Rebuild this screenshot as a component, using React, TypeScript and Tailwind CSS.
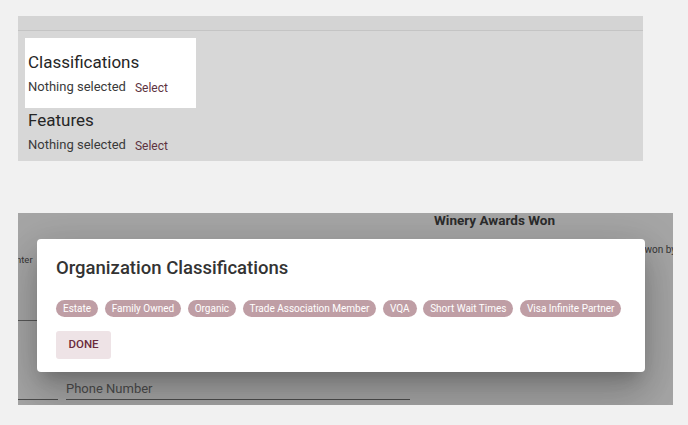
import React from "react";

const chips = [
  "Estate",
  "Family Owned",
  "Organic",
  "Trade Association Member",
  "VQA",
  "Short Wait Times",
  "Visa Infinite Partner",
];

export default function App() {
  return (
    <div
      className="w-[688px] h-[425px] bg-[#f1f1f1] overflow-hidden"
      style={{ fontFamily: "Roboto, 'Liberation Sans', sans-serif" }}
    >
      {/* Top panel */}
      <div className="ml-[18px] mt-[16px] w-[625px] h-[145px] bg-[#d7d7d7] flex flex-col">
        <div className="h-[15px] bg-[#d4d4d4] border-b border-[#c4c4c4]" />
        <div className="pl-[7px] pt-[7px] flex flex-col">
          <div className="w-[171px] h-[70px] bg-white pl-[3px] pt-[14px] flex flex-col">
            <div className="text-[17px] leading-[20px] text-[#262626]">Classifications</div>
            <div className="flex items-center mt-[7px] h-[16px]">
              <span className="text-[13px] text-[#3a3a3a]">Nothing selected</span>
              <span className="ml-[9px] text-[12px] text-[#5e3340] mt-[2px]">Select</span>
            </div>
          </div>
          <div className="pl-[3px] pt-[2px] flex flex-col">
            <div className="text-[17px] leading-[20px] text-[#262626]">Features</div>
            <div className="flex items-center mt-[7px] h-[16px]">
              <span className="text-[13px] text-[#3a3a3a]">Nothing selected</span>
              <span className="ml-[9px] text-[12px] text-[#5e3340] mt-[2px]">Select</span>
            </div>
          </div>
        </div>
      </div>

      {/* Bottom panel with dialog */}
      <div className="relative ml-[18px] mt-[52px] w-[655px] h-[192px] bg-white overflow-hidden flex flex-col">
        <div className="flex justify-end pr-[118px] -mt-[2px] h-[18px] shrink-0">
          <span className="text-[13.5px] leading-[18px] font-bold text-[#444]">Winery Awards Won</span>
        </div>
        <div className="flex justify-end h-[12px] mt-[15px] shrink-0">
          <span className="text-[10px] leading-[12px] text-[#555] -mr-[3px]">won by</span>
        </div>
        <div className="flex h-[12px] -mt-[2px] shrink-0">
          <span className="text-[9.5px] leading-[12px] text-[#555] -ml-[2px]">nter</span>
        </div>
        <div className="mt-[54px] w-[20px] border-b border-[#888] shrink-0" />
        <div className="flex mt-[60px] gap-[8px] items-end shrink-0">
          <div className="w-[40px] border-b border-[#777]" />
          <div className="w-[344px] border-b border-[#777] flex flex-col">
            <span className="text-[13px] leading-[16px] text-[#777] pb-[2px]">Phone Number</span>
          </div>
        </div>

        <div className="absolute inset-0 bg-black/[0.35]" />

        <div className="absolute left-[19px] top-[26px] w-[608px] h-[133px] bg-white rounded-[4px] shadow-[0_11px_15px_-7px_rgba(0,0,0,0.2),0_24px_38px_3px_rgba(0,0,0,0.14),0_9px_46px_8px_rgba(0,0,0,0.12)] pl-[19px] pt-[17px] flex flex-col">
          <div className="text-[18.5px] leading-[24px] text-[#333] font-medium">
            Organization Classifications
          </div>
          <div className="flex gap-[6.5px] mt-[20px]">
            {chips.map((c) => (
              <span
                key={c}
                className="h-[17px] px-[7px] rounded-full bg-[#bf9ea5] text-white text-[10px] font-normal flex items-center leading-none"
              >
                {c}
              </span>
            ))}
          </div>
          <div className="mt-[14px]">
            <button className="w-[55px] h-[28px] rounded-[3px] bg-[#eee3e6] text-[#6b2b3c] text-[11.5px] font-medium">
              DONE
            </button>
          </div>
        </div>
      </div>
    </div>
  );
}
